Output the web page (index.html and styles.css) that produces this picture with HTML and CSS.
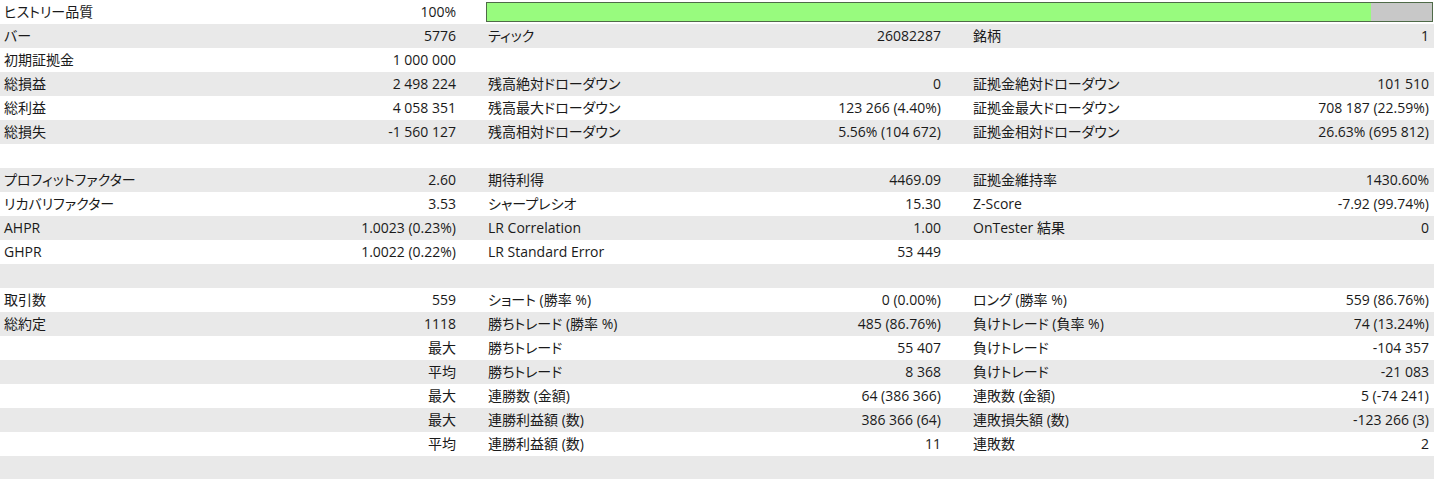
FILE: index.html
```html
<!DOCTYPE html>
<html lang="ja">
<head>
<meta charset="utf-8">
<title>バックテスト</title>
<link rel="stylesheet" href="styles.css">
</head>
<body>
<div class="report">
  <div class="row">
    <div class="cell c1"><span class="lbl">ヒストリー品質</span><span class="val">100%</span></div>
    <div class="cell bar-cell"><div class="track"><div class="fill" style="width:93.5%"></div></div></div>
  </div>
  <div class="row">
    <div class="cell c1"><span class="lbl">バー</span><span class="val">5776</span></div>
    <div class="cell c2"><span class="lbl">ティック</span><span class="val">26082287</span></div>
    <div class="cell c3"><span class="lbl">銘柄</span><span class="val">1</span></div>
  </div>
  <div class="row">
    <div class="cell c1"><span class="lbl">初期証拠金</span><span class="val">1 000 000</span></div>
    <div class="cell c2"></div>
    <div class="cell c3"></div>
  </div>
  <div class="row">
    <div class="cell c1"><span class="lbl">総損益</span><span class="val">2 498 224</span></div>
    <div class="cell c2"><span class="lbl">残高絶対ドローダウン</span><span class="val">0</span></div>
    <div class="cell c3"><span class="lbl">証拠金絶対ドローダウン</span><span class="val">101 510</span></div>
  </div>
  <div class="row">
    <div class="cell c1"><span class="lbl">総利益</span><span class="val">4 058 351</span></div>
    <div class="cell c2"><span class="lbl">残高最大ドローダウン</span><span class="val">123 266 (4.40%)</span></div>
    <div class="cell c3"><span class="lbl">証拠金最大ドローダウン</span><span class="val">708 187 (22.59%)</span></div>
  </div>
  <div class="row">
    <div class="cell c1"><span class="lbl">総損失</span><span class="val">-1 560 127</span></div>
    <div class="cell c2"><span class="lbl">残高相対ドローダウン</span><span class="val">5.56% (104 672)</span></div>
    <div class="cell c3"><span class="lbl">証拠金相対ドローダウン</span><span class="val">26.63% (695 812)</span></div>
  </div>
  <div class="row empty"></div>
  <div class="row">
    <div class="cell c1"><span class="lbl">プロフィットファクター</span><span class="val">2.60</span></div>
    <div class="cell c2"><span class="lbl">期待利得</span><span class="val">4469.09</span></div>
    <div class="cell c3"><span class="lbl">証拠金維持率</span><span class="val">1430.60%</span></div>
  </div>
  <div class="row">
    <div class="cell c1"><span class="lbl">リカバリファクター</span><span class="val">3.53</span></div>
    <div class="cell c2"><span class="lbl">シャープレシオ</span><span class="val">15.30</span></div>
    <div class="cell c3"><span class="lbl">Z-Score</span><span class="val">-7.92 (99.74%)</span></div>
  </div>
  <div class="row">
    <div class="cell c1"><span class="lbl">AHPR</span><span class="val">1.0023 (0.23%)</span></div>
    <div class="cell c2"><span class="lbl">LR Correlation</span><span class="val">1.00</span></div>
    <div class="cell c3"><span class="lbl">OnTester 結果</span><span class="val">0</span></div>
  </div>
  <div class="row">
    <div class="cell c1"><span class="lbl">GHPR</span><span class="val">1.0022 (0.22%)</span></div>
    <div class="cell c2"><span class="lbl">LR Standard Error</span><span class="val">53 449</span></div>
    <div class="cell c3"></div>
  </div>
  <div class="row empty"></div>
  <div class="row">
    <div class="cell c1"><span class="lbl">取引数</span><span class="val">559</span></div>
    <div class="cell c2"><span class="lbl">ショート (勝率 %)</span><span class="val">0 (0.00%)</span></div>
    <div class="cell c3"><span class="lbl">ロング (勝率 %)</span><span class="val">559 (86.76%)</span></div>
  </div>
  <div class="row">
    <div class="cell c1"><span class="lbl">総約定</span><span class="val">1118</span></div>
    <div class="cell c2"><span class="lbl">勝ちトレード (勝率 %)</span><span class="val">485 (86.76%)</span></div>
    <div class="cell c3"><span class="lbl">負けトレード (負率 %)</span><span class="val">74 (13.24%)</span></div>
  </div>
  <div class="row">
    <div class="cell c1"><span class="lbl"></span><span class="val">最大</span></div>
    <div class="cell c2"><span class="lbl">勝ちトレード</span><span class="val">55 407</span></div>
    <div class="cell c3"><span class="lbl">負けトレード</span><span class="val">-104 357</span></div>
  </div>
  <div class="row">
    <div class="cell c1"><span class="lbl"></span><span class="val">平均</span></div>
    <div class="cell c2"><span class="lbl">勝ちトレード</span><span class="val">8 368</span></div>
    <div class="cell c3"><span class="lbl">負けトレード</span><span class="val">-21 083</span></div>
  </div>
  <div class="row">
    <div class="cell c1"><span class="lbl"></span><span class="val">最大</span></div>
    <div class="cell c2"><span class="lbl">連勝数 (金額)</span><span class="val">64 (386 366)</span></div>
    <div class="cell c3"><span class="lbl">連敗数 (金額)</span><span class="val">5 (-74 241)</span></div>
  </div>
  <div class="row">
    <div class="cell c1"><span class="lbl"></span><span class="val">最大</span></div>
    <div class="cell c2"><span class="lbl">連勝利益額 (数)</span><span class="val">386 366 (64)</span></div>
    <div class="cell c3"><span class="lbl">連敗損失額 (数)</span><span class="val">-123 266 (3)</span></div>
  </div>
  <div class="row">
    <div class="cell c1"><span class="lbl"></span><span class="val">平均</span></div>
    <div class="cell c2"><span class="lbl">連勝利益額 (数)</span><span class="val">11</span></div>
    <div class="cell c3"><span class="lbl">連敗数</span><span class="val">2</span></div>
  </div>
  <div class="row empty"></div>
</div>
</body>
</html>
```
FILE: styles.css
```css
html, body {
  margin: 0;
  padding: 0;
  background: #ffffff;
}
body {
  font-family: "Open Sans", "Noto Sans CJK JP", sans-serif;
  font-size: 14px;
  color: #1a1a1a;
  font-feature-settings: "palt";
}
.report {
  width: 1434px;
  display: flex;
  flex-direction: column;
}
.row {
  height: 24px;
  display: grid;
  grid-template-columns: 484px 485px 465px;
  background: #ffffff;
}
.row:nth-child(even) {
  background: #e9e9e9;
}
.cell {
  display: flex;
  align-items: center;
  justify-content: space-between;
  white-space: nowrap;
  line-height: 24px;
}
.c1 {
  padding: 0 28px 0 4px;
}
.c2 {
  padding: 0 28px 0 4px;
}
.c3 {
  padding: 0 5px 0 4px;
}
.bar-cell {
  grid-column: 2 / 4;
  padding: 2px 1px 2px 2px;
}
.track {
  width: 100%;
  height: 20px;
  box-sizing: border-box;
  border: 1px solid #4f6a48;
  background: #c8c8c8;
  display: flex;
}
.fill {
  height: 100%;
  background: #98fb7e;
}
```
